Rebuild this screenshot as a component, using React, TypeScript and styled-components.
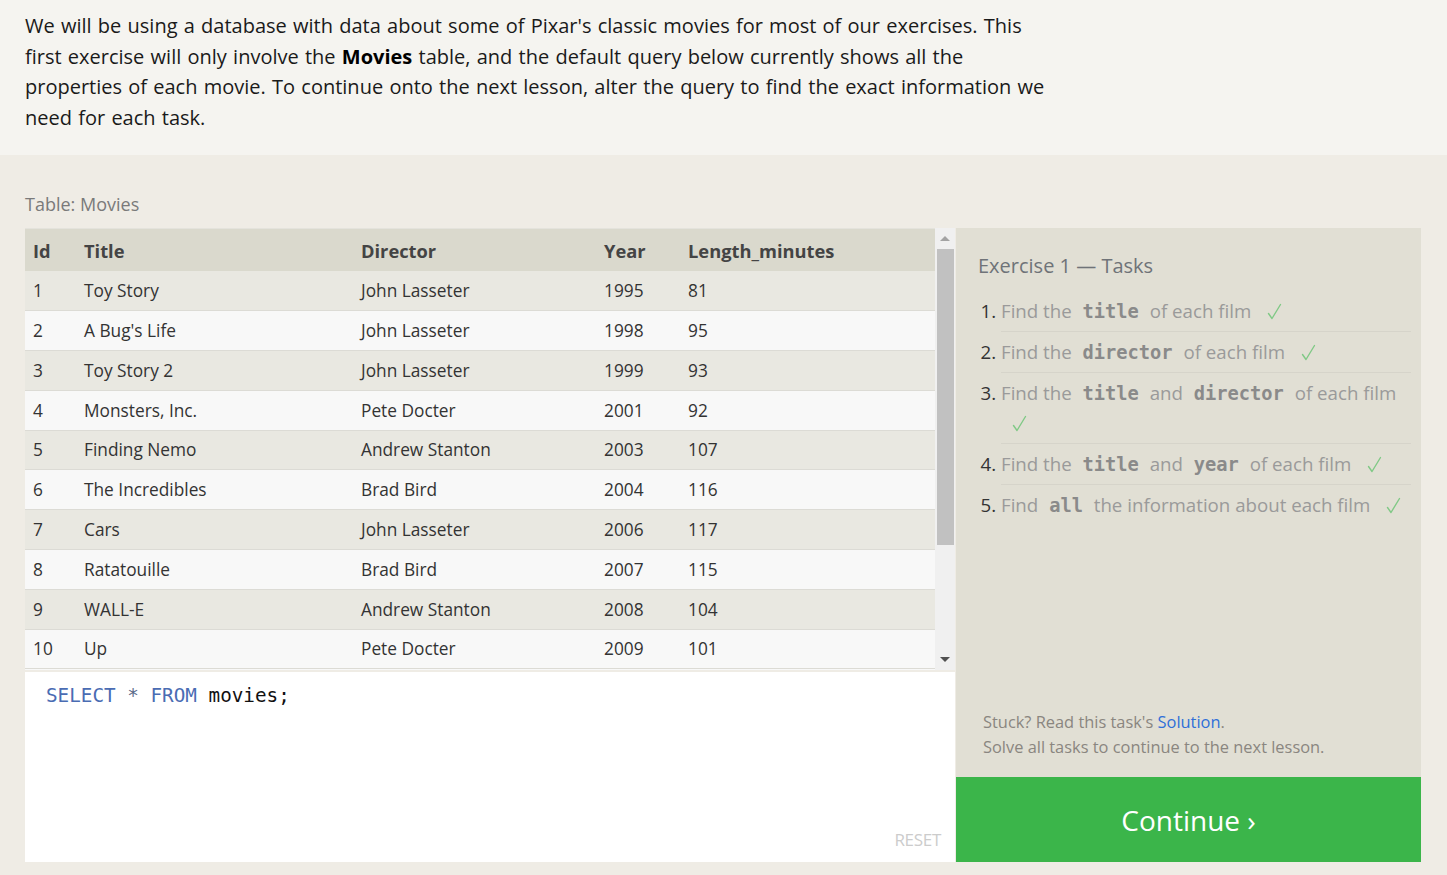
import React from "react";
import styled, { createGlobalStyle } from "styled-components";

const Global = createGlobalStyle`
  html, body { margin: 0; padding: 0; }
  body {
    background: #efece5;
    font-family: "Open Sans", "Noto Sans", sans-serif;
    color: #1c1c1c;
  }
`;

const Intro = styled.section`
  background: #f5f4f0;
  padding: 11px 25px 22px 25px;
`;

const IntroText = styled.p`
  margin: 0;
  max-width: 1025px;
  font-size: 20px;
  line-height: 30.6px;
  word-spacing: 1.05px;
  color: #1a1a1a;
  strong { font-weight: 700; color: #000; }
`;

const Lower = styled.section`
  padding: 36px 26px 13px 25px;
`;

const TableLabel = styled.div`
  font-size: 18px;
  line-height: 26px;
  color: #7a7a7a;
  margin-bottom: 11px;
`;

const Workspace = styled.div`
  display: flex;
  align-items: stretch;
`;

const LeftColumn = styled.div`
  width: 930px;
  display: flex;
  flex-direction: column;
`;

const TableFrame = styled.div`
  display: flex;
  height: 442px;
  background: #f8f8f8;
`;

const TableScroll = styled.div`
  flex: 1;
  overflow: hidden;
`;

const Table = styled.table`
  width: 100%;
  border-collapse: collapse;
  table-layout: fixed;
  font-size: 17.3px;
`;

const HeadCell = styled.th`
  background: #dad9cd;
  height: 42px;
  padding: 0 0 0 8px;
  text-align: left;
  font-weight: 700;
  font-size: 18.3px;
  color: #444;
  border-top: 1px solid #e4e3dc;
`;

const Row = styled.tr<{ $odd: boolean }>`
  background: ${(p) => (p.$odd ? "#e9e8e1" : "#f8f8f8")};
  border-bottom: 1px solid #dcdbd5;
`;

const Cell = styled.td`
  height: 38.8px;
  padding: 0 0 0 8px;
  color: #333;
  white-space: nowrap;
`;

const Scrollbar = styled.div`
  width: 20px;
  background: #f0f0f0;
  display: flex;
  flex-direction: column;
  align-items: center;
`;

const ArrowBox = styled.div`
  height: 21px;
  width: 100%;
  display: flex;
  align-items: center;
  justify-content: center;
`;

const Arrow = styled.span<{ $dir: "up" | "down" }>`
  width: 0;
  height: 0;
  border-left: 5px solid transparent;
  border-right: 5px solid transparent;
  ${(p) =>
    p.$dir === "up"
      ? "border-bottom: 5px solid #a3a3a3;"
      : "border-top: 5px solid #505050;"}
`;

const Thumb = styled.div`
  width: 17px;
  height: 296px;
  background: #c1c1c1;
`;

const TrackRest = styled.div`
  flex: 1;
`;

const Editor = styled.div`
  margin-top: 2px;
  height: 190px;
  background: #fff;
  display: flex;
  flex-direction: column;
  box-sizing: border-box;
  padding: 10px 14px 9px 21px;
`;

const Code = styled.pre`
  flex: 1;
  margin: 0;
  font-family: "DejaVu Sans Mono", "Liberation Mono", monospace;
  font-size: 19.3px;
  line-height: 28px;
  color: #111;
`;

const Keyword = styled.span`
  color: #4a6cb3;
`;

const Operator = styled.span`
  color: #5a6a88;
`;

const ResetButton = styled.button`
  align-self: flex-end;
  background: none;
  border: none;
  padding: 0;
  font-family: "Open Sans", sans-serif;
  font-size: 17px;
  line-height: 26px;
  color: #cccccc;
  text-transform: uppercase;
  letter-spacing: -0.3px;
`;

const RightColumn = styled.div`
  flex: 1;
  margin-left: 1px;
  display: flex;
  flex-direction: column;
`;

const TaskPanel = styled.div`
  flex: 1;
  background: #e1dfd4;
  padding: 23px 10px 18px 22px;
  display: flex;
  flex-direction: column;
`;

const TaskTitle = styled.h3`
  margin: 0 0 10px 0;
  font-weight: 400;
  font-size: 20px;
  line-height: 30px;
  color: #6f7378;
`;

const TaskList = styled.ol`
  margin: 0;
  padding: 0 0 0 23px;
  flex: 1;
`;

const TaskItem = styled.li`
  font-size: 18.7px;
  line-height: 30px;
  padding: 5px 0;
  color: #9a9a9a;
  border-bottom: 1px solid #d6d4ca;
  &:last-child { border-bottom: none; }
  &::marker { color: #333; }
`;

const Field = styled.code`
  font-family: "DejaVu Sans Mono", "Liberation Mono", monospace;
  font-weight: 700;
  font-size: 18.7px;
  line-height: 1;
  color: #8a8a8a;
  padding: 0 6px;
`;

const CheckMark = styled.svg`
  display: inline-block;
  margin-left: 11px;
  width: 15px;
  height: 17px;
  vertical-align: -2px;
`;

const Hint = styled.p`
  margin: 0 0 0 5px;
  font-size: 16.4px;
  line-height: 25px;
  color: #8a8680;
  a { color: #2f6fd8; text-decoration: none; }
`;

const ContinueButton = styled.button`
  height: 85px;
  border: none;
  background: #3bb54a;
  color: #fff;
  font-family: "Open Sans", sans-serif;
  font-size: 28px;
  cursor: pointer;
`;

const Check = () => (
  <CheckMark viewBox="0 0 15 17" aria-hidden="true">
    <path d="M1.5 10.5 L5 15.5 L13.5 1.5" fill="none" stroke="#80c986" strokeWidth="1.4" strokeLinecap="round" strokeLinejoin="round" />
  </CheckMark>
);

const movies: [number, string, string, number, number][] = [
  [1, "Toy Story", "John Lasseter", 1995, 81],
  [2, "A Bug's Life", "John Lasseter", 1998, 95],
  [3, "Toy Story 2", "John Lasseter", 1999, 93],
  [4, "Monsters, Inc.", "Pete Docter", 2001, 92],
  [5, "Finding Nemo", "Andrew Stanton", 2003, 107],
  [6, "The Incredibles", "Brad Bird", 2004, 116],
  [7, "Cars", "John Lasseter", 2006, 117],
  [8, "Ratatouille", "Brad Bird", 2007, 115],
  [9, "WALL-E", "Andrew Stanton", 2008, 104],
  [10, "Up", "Pete Docter", 2009, 101],
];

export default function App() {
  return (
    <>
      <Global />
      <Intro>
        <IntroText>
          We will be using a database with data about some of Pixar's classic movies for most
          of our exercises. This first exercise will only involve the <strong>Movies</strong>{" "}
          table, and the default query below currently shows all the properties of each movie.
          To continue onto the next lesson, alter the query to find the exact information we
          need for each task.
        </IntroText>
      </Intro>
      <Lower>
        <TableLabel>Table: Movies</TableLabel>
        <Workspace>
          <LeftColumn>
            <TableFrame>
              <TableScroll>
                <Table>
                  <colgroup>
                    <col style={{ width: 51 }} />
                    <col style={{ width: 277 }} />
                    <col style={{ width: 243 }} />
                    <col style={{ width: 84 }} />
                    <col />
                  </colgroup>
                  <thead>
                    <tr>
                      <HeadCell>Id</HeadCell>
                      <HeadCell>Title</HeadCell>
                      <HeadCell>Director</HeadCell>
                      <HeadCell>Year</HeadCell>
                      <HeadCell>Length_minutes</HeadCell>
                    </tr>
                  </thead>
                  <tbody>
                    {movies.map((m, i) => (
                      <Row key={m[0]} $odd={i % 2 === 0}>
                        {m.map((v, j) => (
                          <Cell key={j}>{v}</Cell>
                        ))}
                      </Row>
                    ))}
                  </tbody>
                </Table>
              </TableScroll>
              <Scrollbar>
                <ArrowBox>
                  <Arrow $dir="up" />
                </ArrowBox>
                <Thumb />
                <TrackRest />
                <ArrowBox>
                  <Arrow $dir="down" />
                </ArrowBox>
              </Scrollbar>
            </TableFrame>
            <Editor>
              <Code>
                <Keyword>SELECT</Keyword> <Operator>*</Operator> <Keyword>FROM</Keyword> movies;
              </Code>
              <ResetButton>Reset</ResetButton>
            </Editor>
          </LeftColumn>
          <RightColumn>
            <TaskPanel>
              <TaskTitle>Exercise 1 — Tasks</TaskTitle>
              <TaskList>
                <TaskItem>
                  Find the <Field>title</Field> of each film <Check />
                </TaskItem>
                <TaskItem>
                  Find the <Field>director</Field> of each film <Check />
                </TaskItem>
                <TaskItem>
                  Find the <Field>title</Field> and <Field>director</Field> of each film <Check />
                </TaskItem>
                <TaskItem>
                  Find the <Field>title</Field> and <Field>year</Field> of each film <Check />
                </TaskItem>
                <TaskItem>
                  Find <Field>all</Field> the information about each film <Check />
                </TaskItem>
              </TaskList>
              <Hint>
                Stuck? Read this task's <a href="#">Solution</a>.
                <br />
                Solve all tasks to continue to the next lesson.
              </Hint>
            </TaskPanel>
            <ContinueButton>Continue ›</ContinueButton>
          </RightColumn>
        </Workspace>
      </Lower>
    </>
  );
}
